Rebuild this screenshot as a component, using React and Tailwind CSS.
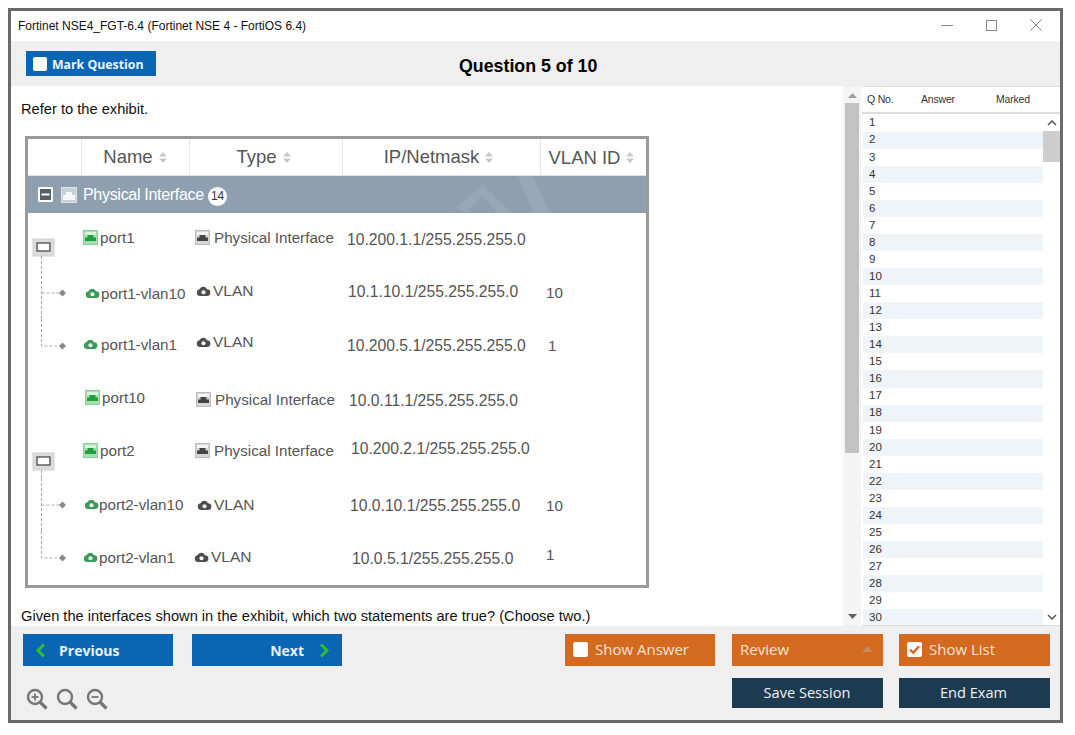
import React from "react";

const Sort = () => (
  <svg width="10" height="13" viewBox="0 0 10 13" className="ml-[5px] shrink-0">
    <path d="M5 1 L9 5.5 H1 Z M5 12 L9 7.5 H1 Z" fill="#c4c8cc" />
  </svg>
);

const PortIcon = ({ green }) => (
  <svg width="15" height="15" viewBox="0 0 15 15" className="shrink-0">
    <rect x="0.5" y="0.5" width="14" height="14" fill={green ? "#a6dcae" : "#d6d6d6"} stroke={green ? "#8fd09a" : "#bdbdbd"} />
    <rect x="2" y="2" width="11" height="3" fill={green ? "#d6f2da" : "#f4f4f4"} />
    <path d="M2 11 V7.5 H4.5 V5 H10.5 V7.5 H13 V11 Z" fill={green ? "#1fa03c" : "#444"} />
  </svg>
);

const CloudIcon = ({ green }) => (
  <svg width="15" height="12" viewBox="0 0 15 12" className="shrink-0">
    <path d="M4 11 A3.4 3.4 0 0 1 3.4 4.3 A4.2 4.2 0 0 1 11 4.2 A3.4 3.4 0 0 1 11 11 Z" fill={green ? "#3a9a58" : "#4d4d4d"} />
    <circle cx="7.5" cy="7.3" r="2" fill="#fff" />
  </svg>
);

const Parent = ({ second }) => (
  <svg width="55" height="53" viewBox="0 0 55 53" className="shrink-0">
    <g transform={second ? "translate(0 4)" : "translate(0 2)"}>
      <rect x="5" y="24" width="21" height="17" fill="#dcdcdc" stroke="#cfcfcf" />
      <rect x="9" y="28" width="13" height="8" fill="#fff" stroke="#555" strokeWidth="1.4" />
    </g>
    <path d={second ? "M13.5 45 V53" : "M13.5 43 V53"} stroke="#aaa" strokeDasharray="3 2" />
  </svg>
);

const Branch = ({ last }) => (
  <svg width="55" height="53" viewBox="0 0 55 53" className="shrink-0">
    <path d={last ? "M13.5 0 V27 H32" : "M13.5 0 V53 M13.5 27 H32"} fill="none" stroke="#aaa" strokeDasharray="3 2" />
    <path d="M34.5 23.5 L38 27 L34.5 30.5 L31 27 Z" fill="#888" />
  </svg>
);

const Cell = ({ className, children }) => (
  <div className={"flex items-center shrink-0 whitespace-nowrap " + className}>{children}</div>
);

const Row = ({ tree, name, type, ip, vlan, n, t, i, v }) => (
  <div className="flex h-[53px] items-center text-[15.2px] leading-none text-[#555]">
    <div className="w-[55px] h-[53px] shrink-0 self-start mt-[1px]">
      {tree === "parent" && <Parent />}
      {tree === "parent2" && <Parent second />}
      {tree === "branch" && <Branch />}
      {tree === "last" && <Branch last />}
    </div>
    <Cell className={"w-[112px] " + n}>{name}</Cell>
    <Cell className={"w-[152px] " + t}>{type}</Cell>
    <Cell className={"w-[199px] text-[15.7px] " + i}>{ip}</Cell>
    <Cell className={"w-[40px] " + v}>{vlan}</Cell>
  </div>
);

const PortName = ({ label }) => (<><PortIcon green /><span className="ml-[2px]">{label}</span></>);
const VlanName = ({ label, gap }) => (<><CloudIcon green /><span className={gap}>{label}</span></>);
const PhysType = () => (<><PortIcon /><span className="ml-[4px]">Physical Interface</span></>);
const VlanType = () => (<><CloudIcon /><span className="ml-[2px] text-[15.5px]">VLAN</span></>);

const Exhibit = () => (
  <div className="ml-[14px] mt-[17px] w-[624px] h-[452px] border-[3px] border-[#9a9a9a] bg-white shrink-0 overflow-hidden" style={{ fontFamily: "'Liberation Sans', Arial, sans-serif" }}>
    <div className="flex h-[37px] text-[18.5px] text-[#555] border-b border-[#dfe3e6]">
      <div className="w-[54px] border-r border-[#e6e6e6]" />
      <div className="w-[108px] flex items-center justify-center border-r border-[#e6e6e6]">Name<Sort /></div>
      <div className="w-[153px] flex items-center justify-center border-r border-[#e6e6e6] pr-[4px]">Type<Sort /></div>
      <div className="w-[198px] flex items-center justify-center border-r border-[#e6e6e6] pr-[5px]">IP/Netmask<Sort /></div>
      <div className="flex-1 flex items-center justify-center pt-[1px] pr-[3px]">VLAN ID<Sort /></div>
    </div>
    <div className="relative flex items-center h-[37px] bg-[#8e9fb0] text-[16px] text-white tracking-[-0.3px]">
      <svg width="624" height="37" viewBox="0 0 624 37" className="absolute left-0 top-0">
        <path d="M427 32 L455 9 L484 37 L470 37 L454 20 L438 37 Z M490 0 L505 0 L522 37 L505 37 Z" fill="#97a7b6" />
      </svg>
      <svg width="17" height="17" viewBox="0 0 17 17" className="relative ml-[9px] shrink-0">
        <rect x="1" y="1" width="15" height="15" rx="1" fill="#fff" />
        <rect x="3" y="3" width="11" height="11" fill="#55606b" />
        <rect x="4.5" y="7.5" width="8" height="2" fill="#fff" />
      </svg>
      <svg width="16" height="16" viewBox="0 0 16 16" className="relative ml-[7px] shrink-0">
        <rect x="0.5" y="0.5" width="15" height="15" fill="#c8d0d8" stroke="#dde2e7" />
        <path d="M2 8 H5 V5 H11 V8 H14 V13 H2 Z" fill="#f4f6f8" />
      </svg>
      <span className="relative ml-[6px]">Physical Interface</span>
      <span className="relative ml-[4px] mt-[3px] w-[19px] h-[19px] rounded-full bg-white text-[#333] text-[12px] flex items-center justify-center">14</span>
    </div>
    <div className="mt-[-1px]">
      <Row tree="parent" n="mt-[-1px]" t="mt-[-1px]" i="mt-[2px]" v=""
        name={<PortName label="port1" />} type={<PhysType />} ip="10.200.1.1/255.255.255.0" />
      <Row tree="branch" n="mt-[4px] pl-[2px]" t="mt-[-1px] pl-[1px]" i="mt-[1px] pl-[1px]" v="mt-[3px]"
        name={<VlanName label="port1-vlan10" gap="ml-[1px]" />} type={<VlanType />} ip="10.1.10.1/255.255.255.0" vlan="10" />
      <Row tree="last" t="mt-[-5px] pl-[1px]" i="mt-[2px]" v="mt-[2px] pl-[2px]"
        name={<VlanName label="port1-vlan1" gap="ml-[3px]" />} type={<VlanType />} ip="10.200.5.1/255.255.255.0" vlan="1" />
      <Row n="mt-[1px] pl-[2px]" t="mt-[4px] pl-[1px]" i="mt-[6px] pl-[2px]" v=""
        name={<PortName label="port10" />} type={<PhysType />} ip="10.0.11.1/255.255.255.0" />
      <Row tree="parent2" n="mt-[1px]" t="mt-[0px]" i="mt-[-3px] pl-[4px]" v=""
        name={<PortName label="port2" />} type={<PhysType />} ip="10.200.2.1/255.255.255.0" />
      <Row tree="branch" n="mt-[2px] pl-[1px]" t="mt-[3px] pl-[2px]" i="mt-[4px] pl-[3px]" v="mt-[4px]"
        name={<VlanName label="port2-vlan10" />} type={<VlanType />} ip="10.0.10.1/255.255.255.0" vlan="10" />
      <Row tree="last" n="mt-[2px]" t="mt-[1px] ml-[-1px]" i="mt-[5px] pl-[6px]" v="mt-[-3px] ml-[1px]"
        name={<VlanName label="port2-vlan1" gap="ml-[1px]" />} type={<VlanType />} ip="10.0.5.1/255.255.255.0" vlan="1" />
    </div>
  </div>
);

const Check = ({ checked }) => (
  <span className="w-[15px] h-[15px] rounded-[2px] bg-white flex items-center justify-center shrink-0">
    {checked && (
      <svg width="13" height="13" viewBox="0 0 13 13">
        <path d="M2 6.5 L5.2 9.7 L11 3.2" fill="none" stroke="#d36a20" strokeWidth="2.4" />
      </svg>
    )}
  </span>
);

const ZoomIcon = ({ mark }) => (
  <svg width="22" height="22" viewBox="0 0 22 22" fill="none" stroke="#767676" strokeWidth="2.4">
    <circle cx="9" cy="9" r="7" />
    <path d="M14 14 L20.5 20.5" strokeWidth="3.2" />
    {mark !== "none" && <path d="M5.5 9 H12.5" strokeWidth="1.8" />}
    {mark === "plus" && <path d="M9 5.5 V12.5" strokeWidth="1.8" />}
  </svg>
);

const UpTri = () => (
  <svg width="9" height="5" viewBox="0 0 9 5"><path d="M4.5 0 L9 5 H0 Z" fill="#a0a0a0" /></svg>
);
const DownTri = () => (
  <svg width="9" height="5" viewBox="0 0 9 5"><path d="M4.5 5 L9 0 H0 Z" fill="#606060" /></svg>
);

const nums = Array.from({ length: 30 }, (_, i) => i + 1);

const orange = "h-[32px] bg-[#d36a20] flex items-center text-[15px] text-[#f6e3d3] pb-[2px]";
const navy = "w-[151px] h-[30px] bg-[#1c3a50] flex items-center justify-center text-[14.6px] text-[#eef2f5]";
const blue = "w-[150px] h-[32px] bg-[#0a66b5] flex items-center text-[14px] font-bold text-[#e8f1f9]";

export default function App() {
  return (
    <div className="w-[1075px] h-[735px] bg-white pl-[8px] pt-[8px] pr-[12px] pb-[12px]" style={{ fontFamily: "'Open Sans', sans-serif" }}>
      <div className="w-full h-full border-[3px] border-[#6a6a6a] flex flex-col overflow-hidden bg-white">
        <div className="h-[30px] shrink-0 flex items-center bg-white pl-[7px]">
          <span className="text-[12px] text-[#111] flex-1" style={{ fontFamily: "'Liberation Sans', sans-serif" }}>Fortinet NSE4_FGT-6.4 (Fortinet NSE 4 - FortiOS 6.4)</span>
          <div className="flex items-center pr-[18px] pb-[2px] gap-[33px]">
            <svg width="12" height="12" viewBox="0 0 12 12"><path d="M0 6.5 H12" stroke="#888" /></svg>
            <svg width="11" height="11" viewBox="0 0 11 11"><rect x="0.5" y="0.5" width="10" height="10" fill="none" stroke="#888" /></svg>
            <svg width="12" height="12" viewBox="0 0 12 12"><path d="M0.5 0.5 L11.5 11.5 M11.5 0.5 L0.5 11.5" stroke="#888" /></svg>
          </div>
        </div>

        <div className="h-[45px] shrink-0 bg-[#efefef] relative flex items-center pl-[15px]">
          <div className="w-[130px] h-[25px] bg-[#0a66b5] flex items-center pl-[7px] pt-[1px] text-[12.3px] font-bold text-[#eef5fb]">
            <span className="w-[14px] h-[14px] rounded-[2px] bg-white mr-[5px] shrink-0" /><span className="pt-[2px]">Mark Question</span>
          </div>
          <div className="absolute left-[448px] top-[13px] text-[17.8px] leading-[24px] font-bold text-black" style={{ fontFamily: "'Liberation Sans', sans-serif" }}>Question 5 of 10</div>
        </div>

        <div className="flex-1 min-h-0 flex bg-white">
          <div className="w-[832px] shrink-0 flex flex-col overflow-hidden">
            <p className="pl-[10px] mt-[13px] text-[14.67px] leading-[20px] text-[#111]" style={{ fontFamily: "'Liberation Sans', sans-serif" }}>Refer to the exhibit.</p>
            <Exhibit />
            <p className="pl-[10px] mt-[18px] text-[14.67px] leading-[20px] text-[#111] whitespace-nowrap" style={{ fontFamily: "'Liberation Sans', sans-serif" }}>Given the interfaces shown in the exhibit, which two statements are true? (Choose two.)</p>
          </div>
          <div className="w-[18px] shrink-0 bg-[#f4f4f4] flex flex-col items-center pt-[7px] pb-[7px]">
            <UpTri />
            <div className="w-[14px] h-[350px] bg-[#c2c2c2] mt-[5px]" />
            <div className="flex-1" />
            <DownTri />
          </div>
          <div className="flex-1 min-w-0 ml-[1px] flex flex-col" style={{ fontFamily: "'Liberation Sans', sans-serif" }}>
            <div className="h-[28px] shrink-0 flex items-center bg-white border-t border-b-[2px] border-t-[#e0e0e0] border-b-[#dcdcdc] text-[10.5px] text-[#333] tracking-[-0.2px]">
              <span className="ml-[5px] w-[54px]">Q No.</span>
              <span className="w-[75px]">Answer</span>
              <span>Marked</span>
            </div>
            <div className="flex-1 min-h-0 flex overflow-hidden border-b border-[#dcdcdc]">
              <div className="w-[180px] ml-[1px] shrink-0 pt-[0.5px]">
                {nums.map((n) => (
                  <div key={n} className={"h-[17.07px] pl-[6px] flex items-center text-[11.5px] text-[#333] " + (n % 2 === 0 ? "bg-[#eff4f8]" : "bg-white")}>{n}</div>
                ))}
              </div>
              <div className="flex-1 flex flex-col items-center bg-white pt-[6px] pb-[5px]">
                <svg width="10" height="6" viewBox="0 0 10 6"><path d="M1 5 L5 1 L9 5" fill="none" stroke="#555" strokeWidth="1.5" /></svg>
                <div className="w-full h-[31px] bg-[#cdcdcd] mt-[5px]" />
                <div className="flex-1" />
                <svg width="10" height="6" viewBox="0 0 10 6"><path d="M1 1 L5 5 L9 1" fill="none" stroke="#555" strokeWidth="1.5" /></svg>
              </div>
            </div>
          </div>
        </div>

        <div className="h-[94px] shrink-0 bg-[#efefef] pl-[12px] pr-[10px] pt-[8px] flex justify-between">
          <div className="flex flex-col">
            <div className="flex gap-[19px]">
              <div className={blue + " pl-[12px]"}>
                <svg width="11" height="15" viewBox="0 0 11 15" className="mr-[13px]"><path d="M9 1.5 L3 7.5 L9 13.5" fill="none" stroke="#2fbf2f" strokeWidth="3" /></svg>
                Previous
              </div>
              <div className={blue + " justify-end pr-[12px]"}>
                Next
                <svg width="11" height="15" viewBox="0 0 11 15" className="ml-[15px]"><path d="M2 1.5 L8 7.5 L2 13.5" fill="none" stroke="#2fbf2f" strokeWidth="3" /></svg>
              </div>
            </div>
            <div className="flex gap-[8px] mt-[22px] ml-[3px]">
              <ZoomIcon mark="plus" />
              <ZoomIcon mark="none" />
              <ZoomIcon mark="minus" />
            </div>
          </div>
          <div className="flex flex-col items-end">
            <div className="flex">
              <div className={orange + " w-[150px] pl-[8px] mr-[17px]"}><Check /><span className="ml-[7px]">Show Answer</span></div>
              <div className={orange + " w-[151px] pl-[8px] justify-between pr-[10px] mr-[16px]"}>
                <span>Review</span>
                <svg width="11" height="6" viewBox="0 0 11 6"><path d="M5.5 0 L11 6 H0 Z" fill="#c58a60" /></svg>
              </div>
              <div className={orange + " w-[151px] pl-[8px]"}><Check checked /><span className="ml-[7px]">Show List</span></div>
            </div>
            <div className="flex gap-[16px] mt-[12px]">
              <div className={navy + " pr-[1px]"}>Save Session</div>
              <div className={navy + " pr-[2px]"}>End Exam</div>
            </div>
          </div>
        </div>
      </div>
    </div>
  );
}
